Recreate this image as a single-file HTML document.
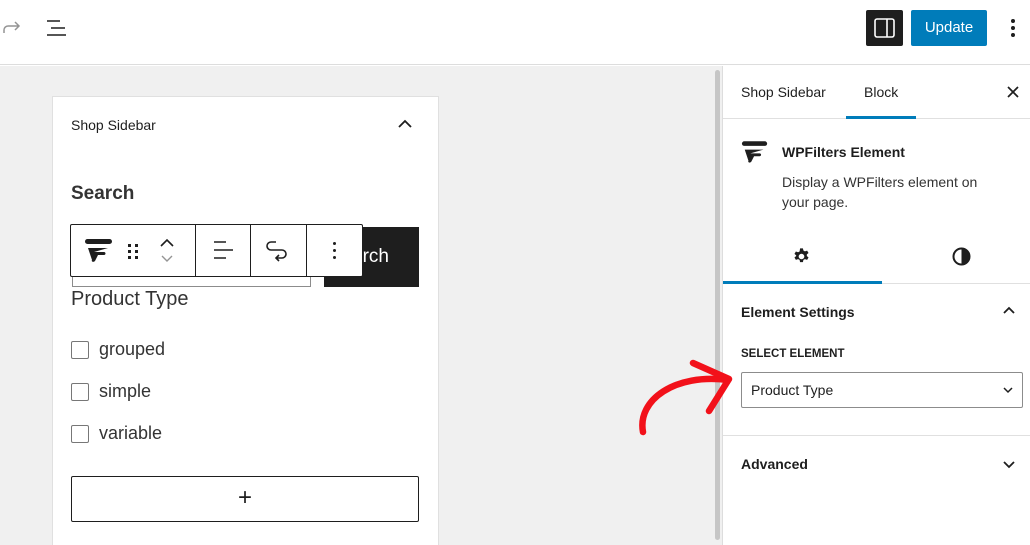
<!DOCTYPE html>
<html><head><style>
*{box-sizing:border-box;margin:0;padding:0}
html,body{width:1030px;height:545px;overflow:hidden}
body{background:#fff;font-family:"Liberation Sans",sans-serif;color:#1e1e1e;position:relative}
.a{position:absolute}
</style></head><body>
<div class="a" style="left:0;top:0;width:1030px;height:65px;background:#fff;border-bottom:1px solid #ddd"></div>
<svg class="a" style="left:0;top:16px" width="24" height="24" viewBox="0 0 24 24"><path d="M4 17v-3a4 4 0 0 1 4-4h11M15 6l4 4-4 4" fill="none" stroke="#949494" stroke-width="1.5"/></svg>
<svg class="a" style="left:45px;top:16px" width="24" height="24" viewBox="0 0 24 24"><path d="M2 5h13M6 12h14M2 19h19" stroke="#1e1e1e" stroke-width="1.6"/></svg>
<div class="a" style="left:866px;top:10px;width:37px;height:36px;background:#1e1e1e;border-radius:2px"></div>
<svg class="a" style="left:874px;top:18px" width="21" height="20" viewBox="0 0 21 20"><rect x="1" y="1" width="19" height="18" rx="2" fill="none" stroke="#fff" stroke-width="1.6"/><path d="M13 1v18" stroke="#fff" stroke-width="1.6"/></svg>
<div class="a" style="left:911px;top:10px;width:76px;height:36px;background:#007cba;border-radius:2px;color:#fff;font-size:15px;line-height:36px;text-align:center">Update</div>
<div class="a" style="left:1011px;top:19px;width:4px;height:4px;border-radius:2px;background:#1e1e1e;box-shadow:0 7px 0 #1e1e1e,0 14px 0 #1e1e1e"></div>
<div class="a" style="left:0;top:66px;width:722px;height:479px;background:#f0f0f0"></div>
<div class="a" style="left:715px;top:70px;width:5px;height:470px;background:#c6c6c6;border-radius:3px"></div>
<div class="a" style="left:52px;top:96px;width:387px;height:460px;background:#fff;border:1px solid #e0e0e0"></div>
<div class="a" style="left:71px;top:117px;font-size:14px">Shop Sidebar</div>
<svg class="a" style="left:396px;top:116px" width="18" height="16" viewBox="0 0 18 16"><path d="M3 11l6-6 6 6" fill="none" stroke="#1e1e1e" stroke-width="1.8"/></svg>
<div class="a" style="left:71px;top:183px;font-size:19px;font-weight:bold;color:#333">Search</div>
<div class="a" style="left:72px;top:232px;width:239px;height:55px;border:1px solid #8c8c8c;background:#fff"></div>
<div class="a" style="left:324px;top:227px;width:95px;height:60px;background:#1e1e1e;color:#fff;font-size:19px;line-height:60px;padding-left:28px">arch</div>
<div class="a" style="left:70px;top:224px;width:293px;height:53px;background:#fff;border:1px solid #1e1e1e;border-radius:2px"></div>
<div class="a" style="left:195px;top:225px;width:1px;height:51px;background:#1e1e1e"></div>
<div class="a" style="left:250px;top:225px;width:1px;height:51px;background:#1e1e1e"></div>
<div class="a" style="left:306px;top:225px;width:1px;height:51px;background:#1e1e1e"></div>
<svg class="a" style="left:84px;top:238px" width="30" height="25" viewBox="0 0 30 25"><rect x="1" y="1" width="27" height="5" rx="2.5" fill="#1e1e1e"/><path d="M4 10h20l-14 4h10c2 0 2 3 0 3h-6l-3 6c-2 2-4 0-3-1z" fill="#1e1e1e"/></svg>
<div class="a" style="left:128px;top:244px;width:3px;height:3px;background:#1e1e1e;box-shadow:7px 0 #1e1e1e,0 6px #1e1e1e,7px 6px #1e1e1e,0 12px #1e1e1e,7px 12px #1e1e1e"></div>
<svg class="a" style="left:159px;top:236px" width="16" height="30" viewBox="0 0 16 30"><path d="M2 10l6-6 6 6" fill="none" stroke="#1e1e1e" stroke-width="1.6"/><path d="M3 20l5 5 5-5" fill="none" stroke="#949494" stroke-width="1.4"/></svg>
<svg class="a" style="left:212px;top:240px" width="22" height="20" viewBox="0 0 22 20"><path d="M2 2h12M2 10h19M2 18h12" stroke="#1e1e1e" stroke-width="1.6"/></svg>
<svg class="a" style="left:266px;top:238px" width="24" height="26" viewBox="0 0 24 26"><path d="M10 4H5a4 4 0 0 0 0 8h11a4 4 0 0 1 0 8h-5M13 17l-3 3 3 3" fill="none" stroke="#1e1e1e" stroke-width="1.6"/></svg>
<div class="a" style="left:333px;top:242px;width:3px;height:3px;border-radius:2px;background:#1e1e1e;box-shadow:0 7px #1e1e1e,0 14px #1e1e1e"></div>
<div class="a" style="left:71px;top:288px;font-size:20px;color:#333">Product Type</div>
<div class="a" style="left:71px;top:341px;width:18px;height:18px;border:1px solid #777;border-radius:2px"></div>
<div class="a" style="left:99px;top:339px;font-size:18px;color:#333">grouped</div>
<div class="a" style="left:71px;top:383px;width:18px;height:18px;border:1px solid #777;border-radius:2px"></div>
<div class="a" style="left:99px;top:381px;font-size:18px;color:#333">simple</div>
<div class="a" style="left:71px;top:425px;width:18px;height:18px;border:1px solid #777;border-radius:2px"></div>
<div class="a" style="left:99px;top:423px;font-size:18px;color:#333">variable</div>
<div class="a" style="left:71px;top:476px;width:348px;height:46px;border:1px solid #1e1e1e;border-radius:2px;text-align:center;font-size:24px;line-height:42px">+</div>
<div class="a" style="left:722px;top:66px;width:308px;height:479px;background:#fff;border-left:1px solid #ddd"></div>
<div class="a" style="left:723px;top:118px;width:307px;height:1px;background:#e0e0e0"></div>
<div class="a" style="left:741px;top:84px;font-size:14px">Shop Sidebar</div>
<div class="a" style="left:864px;top:84px;font-size:14px">Block</div>
<div class="a" style="left:846px;top:116px;width:70px;height:3px;background:#007cba"></div>
<svg class="a" style="left:1006px;top:85px" width="14" height="14" viewBox="0 0 14 14"><path d="M2 2l10 10M12 2L2 12" stroke="#1e1e1e" stroke-width="1.7"/></svg>
<svg class="a" style="left:741px;top:140px" width="28" height="24" viewBox="0 0 30 25"><rect x="1" y="1" width="27" height="5" rx="2.5" fill="#1e1e1e"/><path d="M4 10h20l-14 4h10c2 0 2 3 0 3h-6l-3 6c-2 2-4 0-3-1z" fill="#1e1e1e"/></svg>
<div class="a" style="left:782px;top:144px;font-size:14px;font-weight:bold">WPFilters Element</div>
<div class="a" style="left:782px;top:172px;font-size:14px;line-height:20px;color:#333;width:220px">Display a WPFilters element on your page.</div>
<div class="a" style="left:723px;top:283px;width:307px;height:1px;background:#e0e0e0"></div>
<div class="a" style="left:723px;top:281px;width:159px;height:3px;background:#007cba"></div>
<svg class="a" style="left:792px;top:247px" width="19" height="19" viewBox="0 0 20 20"><path fill="#1e1e1e" fill-rule="evenodd" d="M8.5 1h3l.5 2.4 1.6.9 2.3-.8 1.5 2.6-1.8 1.6v1.8l1.8 1.6-1.5 2.6-2.3-.8-1.6.9-.5 2.4h-3l-.5-2.4-1.6-.9-2.3.8-1.5-2.6 1.8-1.6V8.7L2.6 7.1l1.5-2.6 2.3.8 1.6-.9zM10 7a3 3 0 1 0 0 6 3 3 0 0 0 0-6z" transform="translate(0 0.5) scale(1 0.95)"/></svg>
<svg class="a" style="left:952px;top:247px" width="19" height="19" viewBox="0 0 19 19"><circle cx="9.5" cy="9.5" r="8" fill="none" stroke="#1e1e1e" stroke-width="2"/><path d="M9.5 1.5a8 8 0 0 1 0 16z" fill="#1e1e1e"/></svg>
<div class="a" style="left:741px;top:304px;font-size:14px;font-weight:bold">Element Settings</div>
<svg class="a" style="left:1001px;top:303px" width="16" height="14" viewBox="0 0 16 14"><path d="M3 10l5-5 5 5" fill="none" stroke="#1e1e1e" stroke-width="1.8"/></svg>
<div class="a" style="left:741px;top:348px;font-size:11.5px;font-weight:bold">SELECT ELEMENT</div>
<div class="a" style="left:741px;top:372px;width:282px;height:36px;border:1px solid #8c8c8c;border-radius:2px;font-size:14px;line-height:34px;padding-left:9px">Product Type</div>
<svg class="a" style="left:1002px;top:385px" width="12" height="10" viewBox="0 0 12 10"><path d="M2 3l4 4 4-4" fill="none" stroke="#1e1e1e" stroke-width="1.5"/></svg>
<div class="a" style="left:723px;top:435px;width:307px;height:1px;background:#e0e0e0"></div>
<div class="a" style="left:741px;top:456px;font-size:14px;font-weight:bold">Advanced</div>
<svg class="a" style="left:1001px;top:458px" width="16" height="14" viewBox="0 0 16 14"><path d="M3 4l5 5 5-5" fill="none" stroke="#1e1e1e" stroke-width="1.8"/></svg>
<svg class="a" style="left:630px;top:355px" width="110" height="90" viewBox="0 0 110 90"><path d="M13 77C7 45 45 18 98 25" fill="none" stroke="#f2111a" stroke-width="6.5" stroke-linecap="round"/><path d="M63 8L99 24 79 56" fill="none" stroke="#f2111a" stroke-width="6.5" stroke-linecap="round" stroke-linejoin="round"/></svg>
</body></html>
